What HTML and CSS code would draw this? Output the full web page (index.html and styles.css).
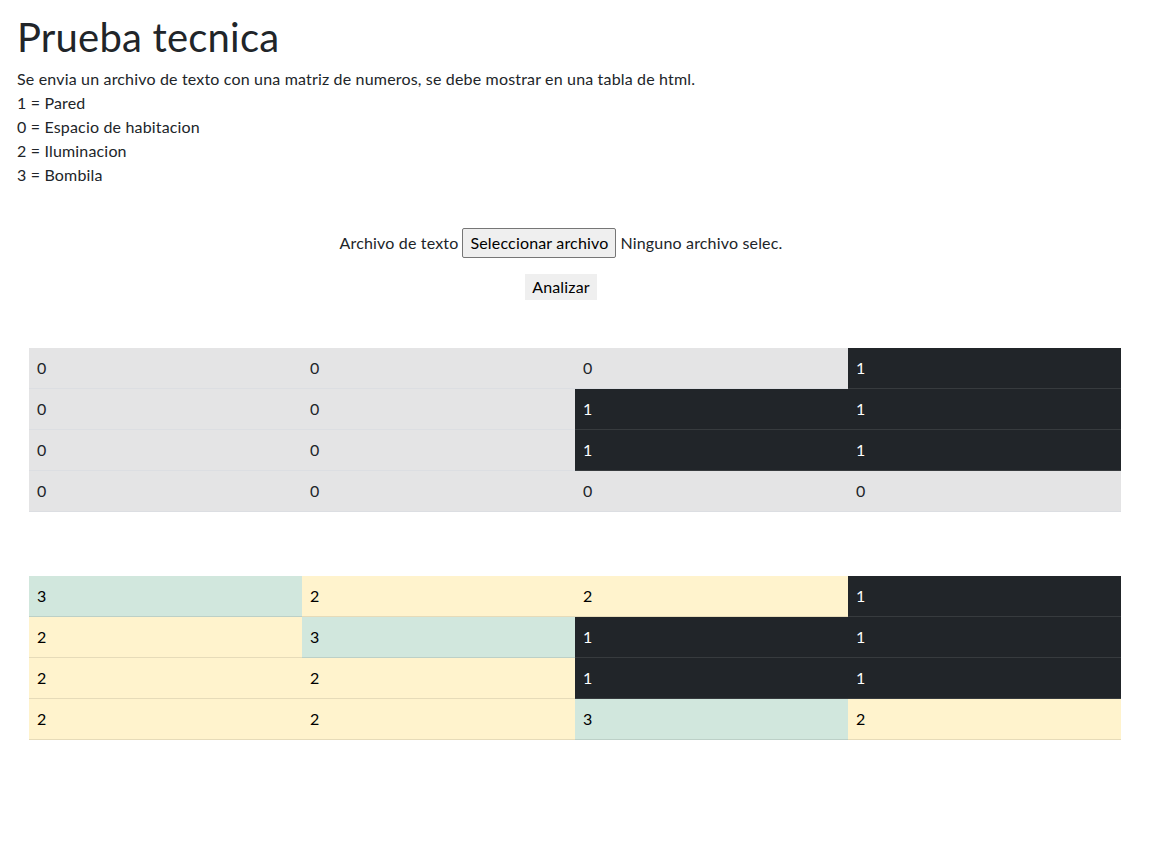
FILE: index.html
```html
<!DOCTYPE html>
<html lang="es">
<head>
<meta charset="utf-8">
<title>Prueba tecnica</title>
<link rel="stylesheet" href="styles.css">
</head>
<body>
<div class="page">
  <h1 class="title">Prueba tecnica</h1>
  <div class="desc">
    <div>Se envia un archivo de texto con una matriz de numeros, se debe mostrar en una tabla de html.</div>
    <div>1 = Pared</div>
    <div>0 = Espacio de habitacion</div>
    <div>2 = Iluminacion</div>
    <div>3 = Bombila</div>
  </div>

  <form class="upload">
    <div class="file-row">
      <label class="file-label">Archivo de texto</label>
      <span class="file-btn">Seleccionar archivo</span>
      <span class="file-name">Ninguno archivo selec.</span>
    </div>
    <div class="submit-row">
      <button type="button" class="btn-analizar">Analizar</button>
    </div>
  </form>

  <table class="grid">
    <tr><td class="c-sec">0</td><td class="c-sec">0</td><td class="c-sec">0</td><td class="c-dark">1</td></tr>
    <tr><td class="c-sec">0</td><td class="c-sec">0</td><td class="c-dark">1</td><td class="c-dark">1</td></tr>
    <tr><td class="c-sec">0</td><td class="c-sec">0</td><td class="c-dark">1</td><td class="c-dark">1</td></tr>
    <tr><td class="c-sec">0</td><td class="c-sec">0</td><td class="c-sec">0</td><td class="c-sec">0</td></tr>
  </table>

  <table class="grid grid-2">
    <tr><td class="c-ok">3</td><td class="c-warn">2</td><td class="c-warn">2</td><td class="c-dark">1</td></tr>
    <tr><td class="c-warn">2</td><td class="c-ok">3</td><td class="c-dark">1</td><td class="c-dark">1</td></tr>
    <tr><td class="c-warn">2</td><td class="c-warn">2</td><td class="c-dark">1</td><td class="c-dark">1</td></tr>
    <tr><td class="c-warn">2</td><td class="c-warn">2</td><td class="c-ok">3</td><td class="c-warn">2</td></tr>
  </table>
</div>
</body>
</html>
```

FILE: styles.css
```css
html, body {
  margin: 0;
  padding: 0;
  background: #ffffff;
}

body {
  font-family: "Lato", "Noto Sans", sans-serif;
  font-size: 16px;
  line-height: 24px;
  letter-spacing: 0.17px;
  color: #212529;
}

.page {
  padding: 0 17px;
}

.title {
  margin: 13px 0 6px 0;
  font-size: 40px;
  line-height: 48px;
  font-weight: 400;
  letter-spacing: 0.2px;
  color: #212529;
}

.desc {
  margin: 0;
}

.upload {
  width: 1088px;
  margin: 41px 0 0 0;
}

.file-row {
  display: flex;
  justify-content: center;
  align-items: center;
  gap: 4px;
  height: 30px;
}

.file-btn {
  display: inline-block;
  box-sizing: border-box;
  height: 30px;
  line-height: 28px;
  padding: 0 7px;
  border: 1px solid #767676;
  border-radius: 2px;
  background: #efefef;
  color: #000;
}

.submit-row {
  display: flex;
  justify-content: center;
  margin-top: 16px;
}

.btn-analizar {
  font-family: inherit;
  font-size: 16px;
  letter-spacing: 0.17px;
  line-height: 24px;
  height: 26px;
  padding: 1px 7px;
  border: 0;
  border-radius: 0;
  background: #efefef;
  color: #000;
}

.grid {
  width: 1092px;
  margin: 48px 0 0 12px;
  border-collapse: collapse;
  table-layout: fixed;
}

.grid-2 {
  margin-top: 64px;
}

.grid td {
  padding: 8px;
  line-height: 24px;
  border-bottom: 1px solid transparent;
  vertical-align: top;
}

.c-sec {
  background: #e4e4e5;
  border-bottom-color: #dcdee2 !important;
  color: #212529;
}

.c-dark {
  background: #212529;
  border-bottom-color: #373b3e !important;
  color: #ffffff;
}

.c-warn {
  background: #fff3cd;
  border-bottom-color: #e6dbb9 !important;
  color: #000;
}

.c-ok {
  background: #d1e7dd;
  border-bottom-color: #bcd0c7 !important;
  color: #000;
}
```
